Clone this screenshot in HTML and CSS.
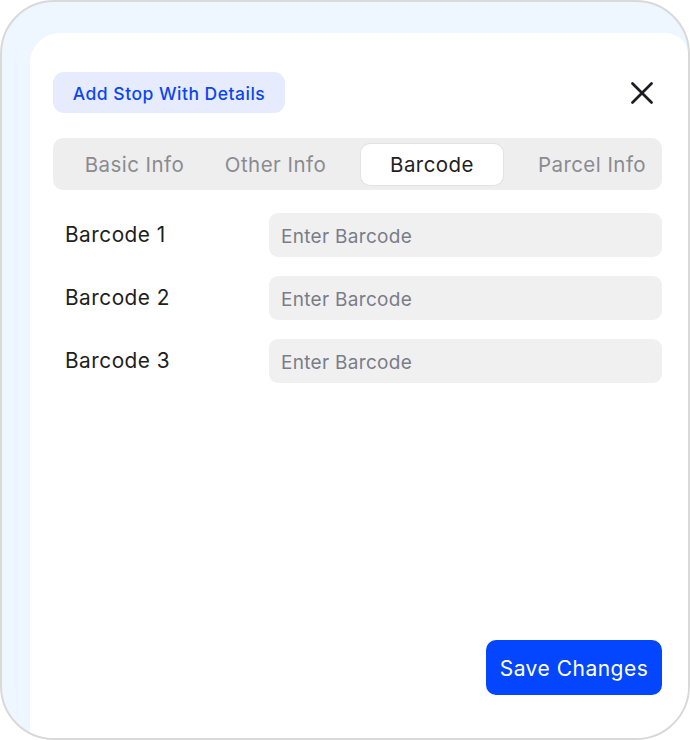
FILE: index.html
```html
<!DOCTYPE html>
<html>
<head>
<meta charset="utf-8">
<link rel="stylesheet" href="styles.css">
</head>
<body>
<div class="frame">
  <div class="panel">
    <div class="header">
      <div class="badge">Add Stop With Details</div>
      <button class="close" aria-label="Close">
        <svg width="22" height="22" viewBox="0 0 22 22"><path d="M1.5 1.5 L20.5 20.5 M20.5 1.5 L1.5 20.5" stroke="#1c1c22" stroke-width="2.7" stroke-linecap="round" fill="none"/></svg>
      </button>
    </div>
    <div class="tabs">
      <div class="tab t1">Basic Info</div>
      <div class="tab t2">Other Info</div>
      <div class="tab t3 active">Barcode</div>
      <div class="tab t4">Parcel Info</div>
    </div>
    <div class="form">
      <label class="label">Barcode 1</label>
      <div class="input">Enter Barcode</div>
      <label class="label">Barcode 2</label>
      <div class="input">Enter Barcode</div>
      <label class="label">Barcode 3</label>
      <div class="input">Enter Barcode</div>
    </div>
    <div class="footer">
      <button class="save">Save Changes</button>
    </div>
  </div>
</div>
</body>
</html>
```
FILE: styles.css
```css
* { box-sizing: border-box; }
html, body { margin: 0; padding: 0; background: #fff; }
body { font-family: Inter, "Noto Sans", sans-serif; }
.frame {
  width: 690px;
  height: 740px;
  border: 2px solid #d9d9d9;
  border-radius: 54px;
  overflow: hidden;
  background: #eef6ff;
  padding: 31px 0 0 28px;
}
.panel {
  height: 100%;
  background: #fff;
  border-radius: 30px 22px 0 0;
  padding: 39px 26px 43px 23px;
  display: flex;
  flex-direction: column;
}
.header {
  display: flex;
  align-items: center;
  justify-content: space-between;
  height: 41px;
}
.badge {
  height: 41px;
  width: 232px;
  display: flex;
  align-items: center;
  justify-content: center;
  background: #e6ecfd;
  border-radius: 11px;
  color: #0b45f2;
  font-size: 17.5px;
  font-weight: 500;
  letter-spacing: 0.5px;
  padding-top: 2px;
}
.close {
  border: 0;
  background: none;
  padding: 0;
  width: 22px;
  height: 22px;
  margin-right: 9px;
  display: flex;
}
.tabs {
  margin-top: 25px;
  height: 52px;
  background: #eeeeef;
  border-radius: 10px;
  padding: 6px;
  display: grid;
  grid-template-columns: 151px 131px 162px 1fr;
}
.tab {
  display: flex;
  align-items: center;
  justify-content: center;
  font-size: 20.5px;
  letter-spacing: 0.45px;
  color: #8b8b8f;
  height: 41px;
}
.t3 { margin-left: 20px; }
.t4 { margin-left: 25px; }
.tab.active {
  background: #fff;
  color: #1f1f22;
  border-radius: 9px;
  box-shadow: 0 0 0 1px #e2e2e4;
}
.form {
  margin-top: 23px;
  display: grid;
  grid-template-columns: 216px 1fr;
  row-gap: 19px;
  align-items: center;
}
.label {
  padding-left: 12px;
  font-size: 20.8px;
  letter-spacing: 0.5px;
  color: #1e1e20;
  margin-top: -1px;
}
.input {
  height: 44px;
  background: #f0f0f1;
  border-radius: 9px;
  display: flex;
  align-items: center;
  padding-left: 12px;
  padding-top: 2px;
  font-size: 19px;
  letter-spacing: 0.3px;
  color: #7a7d88;
}
.footer {
  margin-top: auto;
  display: flex;
  justify-content: flex-end;
}
.save {
  width: 176px;
  height: 55px;
  background: #0346fd;
  color: #fff;
  border: 0;
  border-radius: 10px;
  font-family: Inter, "Noto Sans", sans-serif;
  font-size: 21px;
  letter-spacing: 0.5px;
  padding-top: 3px;
}
```
